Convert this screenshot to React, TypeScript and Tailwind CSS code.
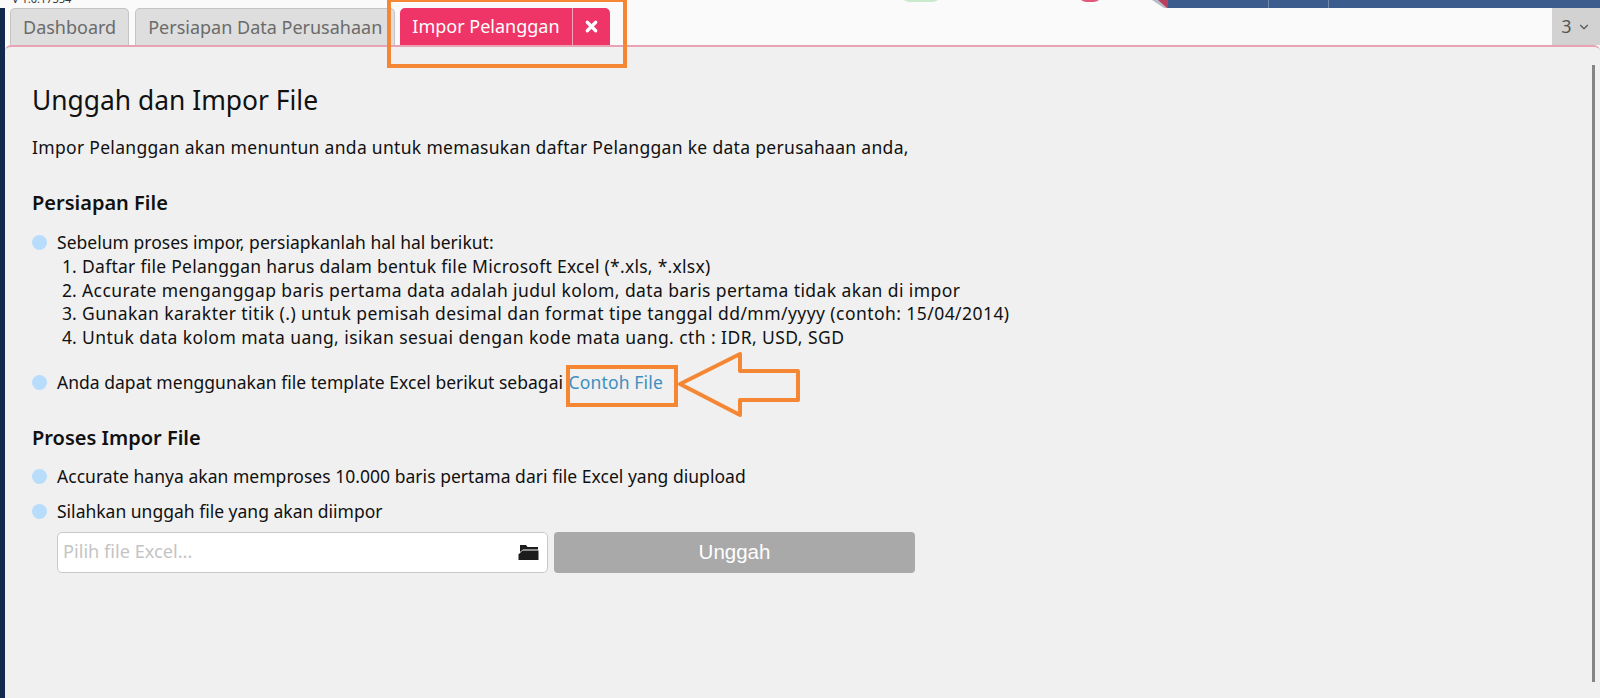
import React from 'react';
import { ChevronDown, X } from 'lucide-react';

const fileRules = [
  { text: 'Daftar file Pelanggan harus dalam bentuk file Microsoft Excel (*.xls, *.xlsx)', spacing: 'tracking-[0.27px]' },
  { text: 'Accurate menganggap baris pertama data adalah judul kolom, data baris pertama tidak akan di impor', spacing: 'tracking-[0.4px]' },
  { text: 'Gunakan karakter titik (.) untuk pemisah desimal dan format tipe tanggal dd/mm/yyyy (contoh: 15/04/2014)', spacing: 'tracking-[0.44px]' },
  { text: 'Untuk data kolom mata uang, isikan sesuai dengan kode mata uang. cth : IDR, USD, SGD', spacing: 'tracking-[0.43px]' },
];

function Bullet({ children }: { children: React.ReactNode }) {
  return (
    <div className="flex items-start">
      <span className="mt-[4px] mr-[10px] h-[15px] w-[15px] shrink-0 rounded-full bg-[#b8dcfb]" />
      <div className="min-w-0">{children}</div>
    </div>
  );
}

function ArrowAnnotation() {
  return (
    <svg className="absolute left-[676px] top-[350px]" width="126" height="70" viewBox="0 0 126 70">
      <path
        d="M4 34 L64 4 L64 21 L122 21 L122 50 L64 50 L64 65 Z"
        fill="none"
        stroke="#f58634"
        strokeWidth="4"
        strokeLinejoin="round"
      />
    </svg>
  );
}

function FolderIcon() {
  return (
    <svg width="21" height="17" viewBox="0 0 21 17">
      <path d="M2 3 V1 H8 L9.500 3 H20 V5.500 H5 L2 8 Z" fill="#1c1c1c" />
      <path d="M4.500 6.500 H20.500 V16 H0.500 V10.500 Z" fill="#1c1c1c" />
    </svg>
  );
}

// corner of the app header that peeks out above the tab bar
function HeaderCorner() {
  return (
    <svg className="absolute left-[1150px] top-0" width="20" height="8" viewBox="0 0 20 8">
      <polygon points="2,0 20,0 20,8 14,8" fill="#b9bcc9" />
      <polygon points="8,0 20,0 20,8 17,8" fill="#b8405e" />
    </svg>
  );
}

export default function App() {
  return (
    <div className="relative h-[698px] w-[1600px] overflow-hidden bg-[#fafafa] font-['Noto_Sans',sans-serif] text-[17.5px] text-[#111]">
      {/* window top behind the tabs */}
      <div className="relative h-[8px] bg-[#fafafa]">
        <span className="absolute left-[12px] top-[-9px] text-[11px] text-[#333]">V 1.0.17354</span>
        <span className="absolute left-[900px] top-[-18px] h-[20px] w-[42px] rounded-full bg-[#c9e8cc]" />
        <span className="absolute left-[1077px] top-[-18px] h-[20px] w-[26px] rounded-full bg-[#e0577b]" />
        <HeaderCorner />
        <div className="absolute inset-y-0 left-[1168px] right-0 flex bg-[#3b5c8c]">
          <span className="ml-[100px] w-[61px] border-x border-[#7088ac]" />
        </div>
      </div>

      <div className="flex h-[690px]">
        <div className="w-[5px] shrink-0 bg-[#12294d]" />
        <div className="flex min-w-0 flex-1 flex-col">
          <div className="flex h-[37px] shrink-0 items-end pl-[5px] text-[18px]">
            <div className="flex h-[37px] items-center rounded-t-[5px] border border-b-0 border-[#c4c4c4] bg-[#dedede] px-[12px] text-[#6b6b6b]">
              Dashboard
            </div>
            <div className="ml-[6px] flex h-[37px] items-center rounded-t-[5px] border border-b-0 border-[#c4c4c4] bg-[#dedede] px-[12px] text-[#6b6b6b]">
              Persiapan Data Perusahaan
            </div>
            <div className="ml-[5px] flex h-[37px] items-center rounded-t-[5px] bg-[#ef3567] text-white">
              <span className="px-[12px]">Impor Pelanggan</span>
              <span className="flex h-full w-[38px] items-center justify-center border-l border-[#f7a3b9]">
                <X size={17} strokeWidth={4.5} />
              </span>
            </div>
            <div className="ml-auto flex h-[37px] w-[48px] items-center justify-center gap-[5px] bg-[#d2d2d2] text-[#555]">
              3 <ChevronDown size={14} />
            </div>
          </div>

          {/* main panel */}
          <div className="flex-1 rounded-t-[6px] border-t-2 border-[#e8a3b5] bg-[#f0f0f0] pl-[27px] pt-[31px] leading-[23.500px]">
            <h1 className="text-[26.400px] leading-[44px]">Unggah dan Impor File</h1>
            <p className="mt-[14px] tracking-[0.31px]">Impor Pelanggan akan menuntun anda untuk memasukan daftar Pelanggan ke data perusahaan anda,</p>

            <h2 className="mt-[29px] text-[20px] font-semibold leading-[28px]">Persiapan File</h2>
            <div className="mt-[14px]">
              <Bullet>
                <p className="tracking-[0.02px]">Sebelum proses impor, persiapkanlah hal hal berikut:</p>
                <ol className="pl-[5px] pt-px">
                  {fileRules.map((rule, i) => (
                    <li key={rule.text} className="flex">
                      <span className="w-[20px] shrink-0">{i + 1}.</span>
                      <span className={rule.spacing}>{rule.text}</span>
                    </li>
                  ))}
                </ol>
              </Bullet>
            </div>
            <div className="mt-[22px]">
              <Bullet>
                <span className="tracking-[0.02px]">Anda dapat menggunakan file template Excel berikut sebagai</span>{' '}
                <a className="ml-px tracking-[0.15px] text-[#3f8fbf]">Contoh File</a>
              </Bullet>
            </div>

            <h2 className="mt-[29px] text-[20px] font-semibold leading-[28px]">Proses Impor File</h2>
            <div className="mt-[13px]">
              <Bullet>
                <span className="tracking-[0.03px]">Accurate hanya akan memproses 10.000 baris pertama dari file Excel yang diupload</span>
              </Bullet>
            </div>
            <div className="mt-[12px]">
              <Bullet>Silahkan unggah file yang akan diimpor</Bullet>
            </div>

            <div className="ml-[25px] mt-[8px] flex h-[41px] gap-[6px]">
              <div className="flex w-[491px] items-center justify-between rounded-[5px] border border-[#c8c8c8] bg-white pl-[5px] pr-[8px] text-[18.200px] text-[#c4c4c4]">
                <span>Pilih file Excel...</span>
                <FolderIcon />
              </div>
              <button className="w-[361px] rounded-[4px] bg-[#a9a9a9] font-['Liberation_Sans',sans-serif] text-[20.500px] text-white">
                Unggah
              </button>
            </div>
          </div>
        </div>
      </div>

      <div className="absolute bottom-[16px] right-[5px] top-[65px] w-[3px] bg-[#858585]" />

      {/* orange annotations */}
      <div className="absolute left-[387px] top-[-2px] h-[70px] w-[240px] border-4 border-[#f58634]" />
      <div className="absolute left-[566px] top-[365px] h-[42px] w-[112px] border-4 border-[#f58634]" />
      <ArrowAnnotation />
    </div>
  );
}
